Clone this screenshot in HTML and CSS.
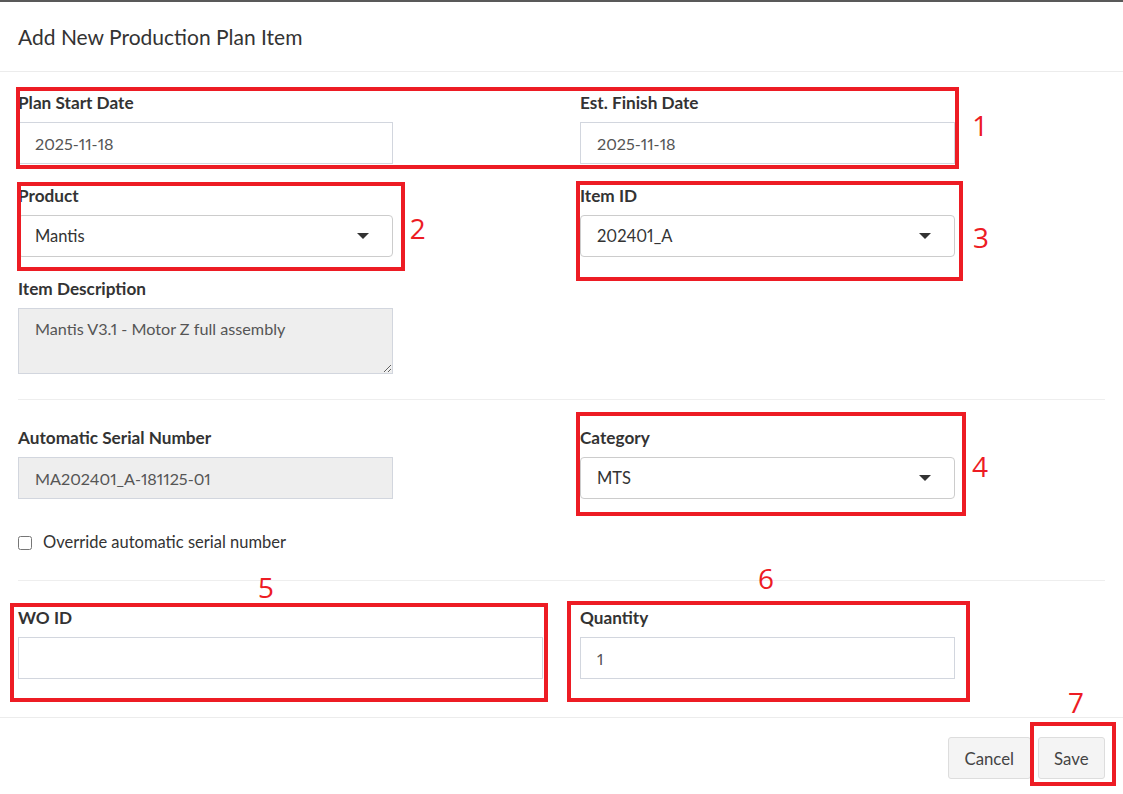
FILE: index.html
```html
<!DOCTYPE html>
<html lang="en">
<head>
  <meta charset="UTF-8" />
  <title>Add New Production Plan Item</title>
  <link rel="stylesheet" href="styles.css">
</head>
<body>

  <div class="topbar"></div>

  <div class="modal">
    <div class="modal-header">
      <h4 class="modal-title">Add New Production Plan Item</h4>
    </div>

    <div class="modal-body">
      <div class="row">
        <div class="form-group">
          <label>Plan Start Date</label>
          <input class="form-control" type="text" value="2025-11-18">
        </div>
        <div class="form-group">
          <label>Est. Finish Date</label>
          <input class="form-control" type="text" value="2025-11-18">
        </div>
      </div>

      <div class="row">
        <div class="form-group">
          <label>Product</label>
          <div class="select">Mantis<span class="caret"></span></div>
        </div>
        <div class="form-group">
          <label>Item ID</label>
          <div class="select">202401_A<span class="caret"></span></div>
        </div>
      </div>

      <div class="row">
        <div class="form-group">
          <label>Item Description</label>
          <textarea class="form-control" readonly>Mantis V3.1 - Motor Z full assembly</textarea>
        </div>
      </div>

      <hr class="sep-first">

      <div class="row">
        <div class="form-group">
          <label>Automatic Serial Number</label>
          <input class="form-control" type="text" value="MA202401_A-181125-01" disabled>
        </div>
        <div class="form-group">
          <label>Category</label>
          <div class="select">MTS<span class="caret"></span></div>
        </div>
      </div>

      <div class="checkbox">
        <label><input type="checkbox"> Override automatic serial number</label>
      </div>

      <hr class="sep-second">

      <div class="row row-wide">
        <div class="form-group">
          <label>WO ID</label>
          <input class="form-control" type="text" value="">
        </div>
        <div class="form-group">
          <label>Quantity</label>
          <input class="form-control" type="text" value="1">
        </div>
      </div>
    </div>

    <div class="modal-footer">
      <button class="btn">Cancel</button>
      <button class="btn">Save</button>
    </div>
  </div>

  <!-- anotaciones en rojo -->
  <div class="mark m1"></div>
  <div class="mark m2"></div>
  <div class="mark m3"></div>
  <div class="mark m4"></div>
  <div class="mark m5"></div>
  <div class="mark m6"></div>
  <div class="mark m7"></div>

  <span class="num n1">1</span>
  <span class="num n2">2</span>
  <span class="num n3">3</span>
  <span class="num n4">4</span>
  <span class="num n5">5</span>
  <span class="num n6">6</span>
  <span class="num n7">7</span>

</body>
</html>
```

FILE: styles.css
```css
body {
  margin: 0;
  padding: 0;
  background: white;
  color: #333;
  font-family: 'Lato', 'Liberation Sans', sans-serif;
  font-size: 16.5px;
  font-variant-numeric: proportional-nums;
}

.topbar {
  height: 2px;
  background: #595959;
}

.modal-header {
  height: 69px;
  padding: 0 18px;
  display: flex;
  align-items: center;
  border-bottom: 1px solid #ececec;
}

.modal-title {
  margin: 0;
  font-size: 21px;
  font-weight: normal;
  color: #333;
}

.modal-body {
  padding: 18px 18px 19px 18px;
}

.row {
  display: grid;
  grid-template-columns: 375px 375px;
  column-gap: 187px;
}

.row-wide {
  grid-template-columns: 525px 375px;
  column-gap: 37px;
}

.form-group {
  margin-bottom: 19px;
}

.form-group label {
  display: block;
  font-size: 17.2px;
  font-weight: bold;
  line-height: 26px;
  margin-bottom: 6px;
  color: #333;
}

.form-control {
  display: block;
  box-sizing: border-box;
  width: 100%;
  height: 42px;
  margin: 0;
  padding: 0 16px;
  border: 1px solid #d2d6de;
  border-radius: 0;
  background: white;
  color: #555;
  font-family: inherit;
  font-size: 16.2px;
  font-variant-numeric: proportional-nums;
  outline: none;
}

.form-control[disabled],
.form-control[readonly] {
  background: #eee;
  color: #555;
}

textarea.form-control {
  height: 66px;
  padding: 7px 16px;
  line-height: 25px;
  resize: vertical;
}

.select {
  box-sizing: border-box;
  height: 42px;
  padding: 0 16px;
  border: 1px solid #ccc;
  border-radius: 4px;
  display: flex;
  align-items: center;
  justify-content: space-between;
  color: #333;
}

.caret {
  width: 0;
  height: 0;
  margin-right: 7px;
  border-top: 6px solid #333;
  border-left: 6px solid transparent;
  border-right: 6px solid transparent;
}

hr {
  border: 0;
  border-top: 1px solid #eee;
  margin: 0;
}

.sep-first {
  margin: 6px 0 25px;
}

.sep-second {
  margin: 25px 0 24px;
}

.checkbox {
  margin-top: 12px;
  line-height: 25px;
}

.checkbox label {
  display: flex;
  align-items: center;
  gap: 11px;
  color: #333;
}

.checkbox input {
  width: 14px;
  height: 14px;
  margin: 0;
}

.modal-footer {
  border-top: 1px solid #ececec;
  padding: 19px 18px 19px 19px;
  display: flex;
  justify-content: flex-end;
  gap: 7px;
}

.btn {
  height: 42px;
  padding: 0 15.5px;
  background: #f4f4f4;
  border: 1px solid #ddd;
  border-radius: 3px;
  color: #444;
  font-family: inherit;
  font-size: 16.8px;
  cursor: pointer;
}

/* marcas rojas encima del formulario */
.mark {
  position: absolute;
  box-sizing: border-box;
  border: 4px solid #ed1c24;
}

.m1 { left: 16px;   top: 87px;  width: 943px; height: 82px; }
.m2 { left: 17px;   top: 182px; width: 388px; height: 89px; }
.m3 { left: 576px;  top: 181px; width: 387px; height: 100px; }
.m4 { left: 576px;  top: 412px; width: 390px; height: 104px; }
.m5 { left: 10px;   top: 603px; width: 538px; height: 99px; }
.m6 { left: 567px;  top: 601px; width: 403px; height: 101px; }
.m7 { left: 1030px; top: 722px; width: 86px;  height: 64px; }

.num {
  position: absolute;
  color: #ed1c24;
  font-family: 'Open Sans', sans-serif;
  font-size: 28px;
  line-height: 30px;
}

.n1 { left: 974px;  top: 110px; }
.n2 { left: 410px;  top: 213px; }
.n3 { left: 973px;  top: 222px; }
.n4 { left: 972px;  top: 451px; }
.n5 { left: 258px;  top: 572px; }
.n6 { left: 758px;  top: 563px; }
.n7 { left: 1069px; top: 687px; }
```
